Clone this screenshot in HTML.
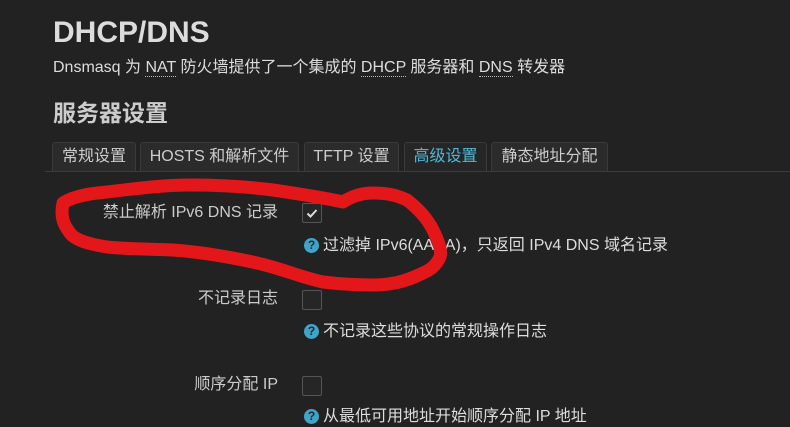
<!DOCTYPE html>
<html><head><meta charset="utf-8"><style>
body{margin:0;width:790px;height:422px;background:#222222;overflow:hidden;position:relative;font-family:"Liberation Sans","Noto Sans CJK SC",sans-serif;color:#ddd}
.a{position:absolute;white-space:nowrap;line-height:20px}
h1{position:absolute;left:53px;top:14px;margin:0;font-size:30px;line-height:38px;font-weight:bold;color:#dcdcdc}
.sub{left:53px;top:58px;font-size:16px;color:#ddd}
.sub u{text-decoration:none;border-bottom:1px dotted #bbb}
h2{position:absolute;left:53px;top:98px;margin:0;font-size:23px;line-height:30px;font-weight:bold;color:#ccc}
.tab{position:absolute;top:142px;height:28px;background:#2b2b2b;border:1px solid #3a3a3a;border-bottom:none;border-radius:3px 3px 0 0;font-size:16px;line-height:28px;text-align:center;color:#ccc}
.line{position:absolute;left:45px;top:171px;width:745px;height:1px;background:#3c3c3c}
.lbl{font-size:16px;color:#ccc;text-align:right;width:240px;left:38px}
.cb{position:absolute;left:302px;width:18px;height:18px;border:1px solid #555;border-radius:2px;background:#262626}
.help{font-size:16px;color:#ddd;left:304px}
.q{display:inline-block;width:15px;height:15px;border-radius:50%;background:#3fa4c8;color:#1c2a30;font-size:12px;font-weight:bold;line-height:15px;text-align:center;margin-right:4px;vertical-align:1px}
</style></head><body>
<h1>DHCP/DNS</h1>
<div class="a sub">Dnsmasq 为 <u>NAT</u> 防火墙提供了一个集成的 <u>DHCP</u> 服务器和 <u>DNS</u> 转发器</div>
<h2>服务器设置</h2>
<div class="tab" style="left:52px;width:82px">常规设置</div>
<div class="tab" style="left:140px;width:157px">HOSTS 和解析文件</div>
<div class="tab" style="left:304px;width:93px">TFTP 设置</div>
<div class="tab" style="left:404px;width:81px;color:#4fb8d8;background:#262626">高级设置</div>
<div class="tab" style="left:491px;width:115px">静态地址分配</div>
<div class="line"></div>

<div class="a lbl" style="top:203px">禁止解析 IPv6 DNS 记录</div>
<div class="cb" style="top:203px"><svg width="18" height="18" viewBox="0 0 18 18"><path d="M4.5 9.5 L7.5 12.5 L13.5 6" stroke="#ddd" stroke-width="2" fill="none"/></svg></div>
<div class="a help" style="top:236px"><span class="q">?</span>过滤掉 IPv6(AAAA)，只返回 IPv4 DNS 域名记录</div>

<div class="a lbl" style="top:289px">不记录日志</div>
<div class="cb" style="top:290px"></div>
<div class="a help" style="top:322px"><span class="q">?</span>不记录这些协议的常规操作日志</div>

<div class="a lbl" style="top:375px">顺序分配 IP</div>
<div class="cb" style="top:376px"></div>
<div class="a help" style="top:407px"><span class="q">?</span>从最低可用地址开始顺序分配 IP 地址</div>

<svg class="a" style="left:0;top:0" width="790" height="422">
<path d="M63 203 C75 195 95 193 107 192 C140 188 165 185 190 185 C220 185 250 187 273 190 C300 194 325 198 343 202 C352 196 362 193 373 193 C390 193 398 196 407 200 C420 210 428 220 433 230 C438 240 442 250 440 257 C436 266 430 270 423 273 C405 282 390 285 373 285 C355 285 340 284 323 282 C300 277 280 268 257 263 C230 257 200 252 173 250 C150 249 125 249 107 247 C88 244 75 240 70 233 C64 225 60 218 63 203 Z" fill="none" stroke="#e3161a" stroke-width="13" stroke-linejoin="round"/>
</svg>
</body></html>
